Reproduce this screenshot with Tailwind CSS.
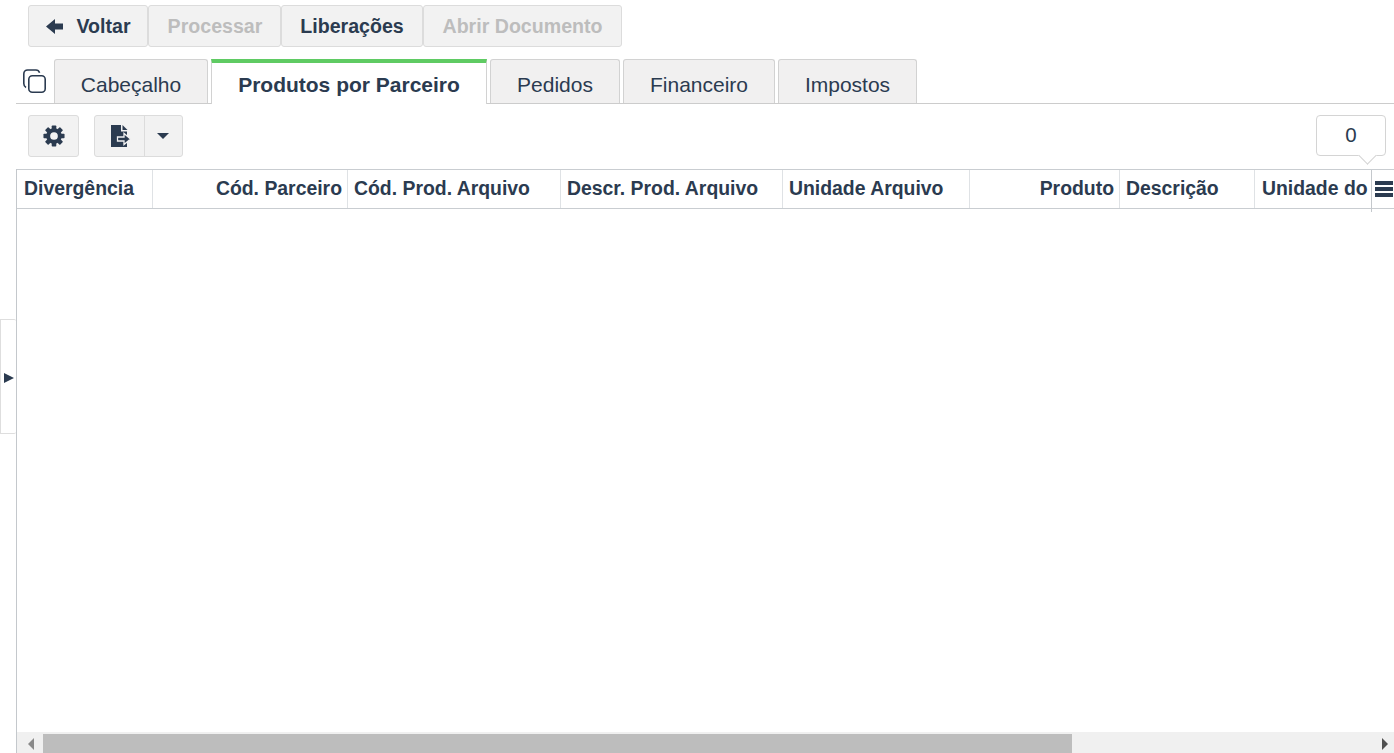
<!DOCTYPE html>
<html lang="pt-BR">
  <head>
    <meta charset="UTF-8" />
    <script src="https://cdn.jsdelivr.net/npm/@tailwindcss/browser@4"></script>
    <title>Produtos por Parceiro</title>
  </head>
  <body class="bg-white overflow-hidden">
    <div class="relative flex h-[753px] w-[1394px] flex-col overflow-hidden font-['Liberation_Sans',Arial,sans-serif] text-[#2b3b50]">
      <!-- acoes -->
      <div class="flex h-[42px] mt-[5px] ml-[28px] text-[19.6px] font-bold">
        <button class="flex w-[120px] items-center justify-center gap-[13px] rounded-[3px] border border-[#dcdcdc] bg-[#f2f2f2] pt-[2px] pl-[1px]">
          <svg class="relative top-[-1px] h-[15px] w-[17px]" viewBox="0 0 17 15" fill="#2b3b50"><path d="M0 7.500 9 0v4.500h8v6H9V15z" /></svg>
          <span>Voltar</span>
        </button>
        <button class="w-[133px] rounded-[3px] border border-[#dcdcdc] bg-[#f2f2f2] pt-[2px] pl-[1px] text-[#bdbdbd]">Processar</button>
        <button class="w-[142px] rounded-[3px] border border-[#dcdcdc] bg-[#f2f2f2] pt-[2px]">Liberações</button>
        <button class="w-[199px] rounded-[3px] border border-[#dcdcdc] bg-[#f2f2f2] pt-[2px] text-[#bdbdbd]">Abrir Documento</button>
      </div>

      <!-- abas -->
      <div class="mt-[12px] ml-[16px] flex h-[45px] items-end border-b border-[#cccccc] text-[21px]">
        <div class="flex h-[44px] w-[38px] items-start pl-[7px] pt-[10px]">
          <svg class="h-[24px] w-[23px]" viewBox="0 0 23 24" fill="none" stroke="#2b3b50" stroke-width="1.600">
            <rect x="5.800" y="6.800" width="16.400" height="16.400" rx="3.500" />
            <path d="M3 18.500C1.700 17.800.8 16.500.8 14.500V5C.8 2.600 2.400 1 4.600 1h8.400c1.800 0 3 1 3.600 2.800" />
          </svg>
        </div>
        <div class="flex h-[44px] w-[154px] items-center justify-center rounded-t-[3px] border border-b-0 border-[#d2d2d2] bg-[#f1f0f0] pt-[6px]">Cabeçalho</div>
        <div class="relative top-[1px] ml-[3px] flex h-[45px] w-[276px] items-center justify-center border-x border-t-[4px] border-x-[#d2d2d2] border-t-[#5fcb63] bg-white pt-[2px] font-bold">Produtos por Parceiro</div>
        <div class="ml-[3px] flex h-[44px] w-[130px] items-center justify-center rounded-t-[3px] border border-b-0 border-[#d2d2d2] bg-[#f1f0f0] pt-[6px]">Pedidos</div>
        <div class="ml-[3px] flex h-[44px] w-[152px] items-center justify-center rounded-t-[3px] border border-b-0 border-[#d2d2d2] bg-[#f1f0f0] pt-[6px]">Financeiro</div>
        <div class="ml-[3px] flex h-[44px] w-[139px] items-center justify-center rounded-t-[3px] border border-b-0 border-[#d2d2d2] bg-[#f1f0f0] pt-[6px]">Impostos</div>
      </div>

      <!-- ferramentas -->
      <div class="mt-[11px] ml-[28px] mr-[8px] flex h-[42px] items-start">
        <button class="flex h-[42px] w-[51px] items-center justify-center rounded-[3px] border border-[#dcdcdc] bg-[#f2f2f2] pb-[1px]">
          <svg class="h-[22px] w-[22px]" viewBox="0 0 24 24" fill="#2b3b50">
            <circle cx="12" cy="12" r="8.500" />
            <rect x="9.500" y="0.500" width="5" height="23" rx="0.800" />
            <rect x="9.500" y="0.500" width="5" height="23" rx="0.800" transform="rotate(45 12 12)" />
            <rect x="9.500" y="0.500" width="5" height="23" rx="0.800" transform="rotate(90 12 12)" />
            <rect x="9.500" y="0.500" width="5" height="23" rx="0.800" transform="rotate(135 12 12)" />
            <circle cx="12" cy="12" r="4.200" fill="#f2f2f2" />
          </svg>
        </button>
        <div class="ml-[15px] flex h-[42px] w-[89px] rounded-[3px] border border-[#dcdcdc] bg-[#f2f2f2]">
          <div class="flex w-[50px] items-center justify-center border-r border-[#dcdcdc] pl-[2px]">
            <svg class="h-[22px] w-[20px]" viewBox="0 0 20 22">
              <path fill="#2b3b50" d="M0 0h10v6.500h6V22H0z" />
              <path fill="#2b3b50" d="M11.500 0l5 5h-5z" />
              <path fill="#2b3b50" stroke="#f2f2f2" stroke-width="1.300" d="M6.500 12h6.500V8.500l6.500 5.500-6.500 5.500V16H6.500z" />
            </svg>
          </div>
          <div class="flex flex-1 items-center justify-center pr-[1px]">
            <div class="h-0 w-0 border-x-[6px] border-t-[6px] border-x-transparent border-t-[#2b3b50]"></div>
          </div>
        </div>
        <div class="relative ml-auto flex h-[41px] w-[70px] items-center justify-center rounded-[4px] border border-[#d4d4d4] bg-white pb-[1px] text-[20.5px]">
          0
          <div class="absolute top-[33px] left-[44px] h-[13px] w-[13px] rotate-45 border-r border-b border-[#d4d4d4] bg-white"></div>
        </div>
      </div>

      <!-- grade -->
      <div class="mt-[12px] ml-[16px] flex min-h-0 flex-1 flex-col border-l border-[#c4c8cc]">
        <div class="relative flex h-[40px] border-y border-[#c9cdd1] text-[19.4px] font-bold whitespace-nowrap">
          <div class="flex w-[136px] items-center border-r border-[#dfe2e5] pl-[7px]">Divergência</div>
          <div class="flex w-[195px] items-center justify-end border-r border-[#dfe2e5] pr-[5px]">Cód. Parceiro</div>
          <div class="flex w-[213px] items-center border-r border-[#dfe2e5] pl-[6px]">Cód. Prod. Arquivo</div>
          <div class="flex w-[222px] items-center border-r border-[#dfe2e5] pl-[6px]">Descr. Prod. Arquivo</div>
          <div class="flex w-[187px] items-center border-r border-[#dfe2e5] pl-[6px]">Unidade Arquivo</div>
          <div class="flex w-[150px] items-center justify-end border-r border-[#dfe2e5] pr-[5px]">Produto</div>
          <div class="flex w-[135px] items-center border-r border-[#dfe2e5] pl-[6px]">Descrição</div>
          <div class="flex w-[116px] items-center overflow-hidden pl-[7px]">Unidade do</div>
          <div class="flex h-[42px] flex-1 items-start border-l border-[#c4c8cc] pt-[11px] pl-[3px]">
            <div class="flex w-[18px] flex-col gap-[2px]">
              <div class="h-[4px] bg-[#2b3b50]"></div>
              <div class="h-[4px] bg-[#2b3b50]"></div>
              <div class="h-[4px] bg-[#2b3b50]"></div>
            </div>
          </div>
        </div>
        <div class="flex-1"></div>
        <!-- rolagem -->
        <div class="flex h-[21px] items-stretch bg-[#f0f0f0] pt-[2px]">
          <div class="flex w-[26px] items-center justify-center pt-[1px] pl-[1px]">
            <div class="h-0 w-0 border-y-[6px] border-r-[6px] border-y-transparent border-r-[#8a8a8a]"></div>
          </div>
          <div class="w-[1029px] bg-[#bdbdbd]"></div>
          <div class="flex flex-1 items-center justify-end pt-[1px] pr-[6px]">
            <div class="h-0 w-0 border-y-[6px] border-l-[6px] border-y-transparent border-l-[#505050]"></div>
          </div>
        </div>
      </div>

      <!-- painel lateral recolhido -->
      <div class="absolute top-[319px] left-0 flex h-[115px] w-[16px] items-center rounded-r-[2px] border border-r-0 border-[#dedede] bg-white pt-[3px] pl-[3px]">
        <div class="h-0 w-0 border-y-[5px] border-l-[10px] border-y-transparent border-l-[#2b3b50]"></div>
      </div>
    </div>
  </body>
</html>
